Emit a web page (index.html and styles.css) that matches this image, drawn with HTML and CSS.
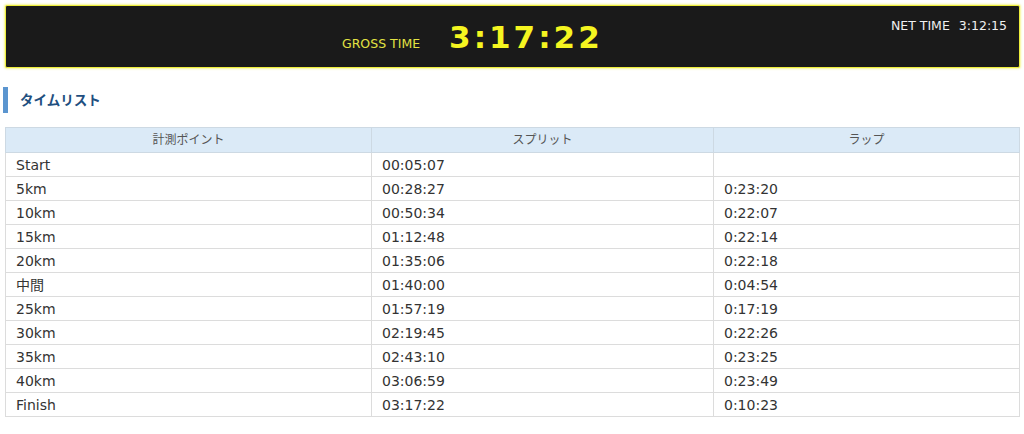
FILE: index.html
```html
<!DOCTYPE html>
<html lang="ja">
<head>
    <meta charset="UTF-8">
    <title>タイムリスト</title>
    <link rel="stylesheet" href="styles.css">
</head>
<body>

    <div class="scoreboard">
        <div class="gross">
            <span class="gross-label">GROSS TIME</span>
            <span class="gross-time">3:17:22</span>
        </div>
        <div class="net">
            <span>NET TIME</span>
            <span>3:12:15</span>
        </div>
    </div>

    <h2 class="section-title">タイムリスト</h2>

    <table class="time-list">
        <thead>
            <tr>
                <th class="col-point">計測ポイント</th>
                <th class="col-split">スプリット</th>
                <th class="col-lap">ラップ</th>
            </tr>
        </thead>
        <tbody>
            <tr><td>Start</td><td>00:05:07</td><td></td></tr>
            <tr><td>5km</td><td>00:28:27</td><td>0:23:20</td></tr>
            <tr><td>10km</td><td>00:50:34</td><td>0:22:07</td></tr>
            <tr><td>15km</td><td>01:12:48</td><td>0:22:14</td></tr>
            <tr><td>20km</td><td>01:35:06</td><td>0:22:18</td></tr>
            <tr><td>中間</td><td>01:40:00</td><td>0:04:54</td></tr>
            <tr><td>25km</td><td>01:57:19</td><td>0:17:19</td></tr>
            <tr><td>30km</td><td>02:19:45</td><td>0:22:26</td></tr>
            <tr><td>35km</td><td>02:43:10</td><td>0:23:25</td></tr>
            <tr><td>40km</td><td>03:06:59</td><td>0:23:49</td></tr>
            <tr><td>Finish</td><td>03:17:22</td><td>0:10:23</td></tr>
        </tbody>
    </table>

</body>
</html>
```

FILE: styles.css
```css
body {
    margin: 0;
    padding: 5px 4px 0 5px;
    background: #fff;
    color: #333;
    font-family: "DejaVu Sans", "Noto Sans CJK JP", sans-serif;
}

.scoreboard {
    display: flex;
    height: 61px;
    background-color: #1a1a1a;
    border: 1px solid #eded3c;
    border-radius: 2px;
    box-shadow: 0 0 2px 1px rgba(240, 240, 80, 0.6);
    padding: 0 12px 0 336px;
}

.gross {
    display: flex;
    align-items: baseline;
    align-self: flex-end;
    padding-bottom: 12px;
}

.gross-label {
    color: #e3e343;
    font-size: 12.5px;
    margin-right: 29px;
}

.gross-time {
    color: #f5f520;
    font-size: 31px;
    font-weight: bold;
    letter-spacing: 3px;
}

.net {
    display: flex;
    gap: 9px;
    margin-left: auto;
    padding-top: 12px;
    color: #f0f0f0;
    font-size: 12.5px;
}

.section-title {
    margin: 19px 0 14px -2px;
    padding: 2px 0 2px 12px;
    border-left: 5px solid #5b95cf;
    color: #1f4f80;
    font-size: 13.5px;
    font-weight: bold;
    line-height: 22px;
}

.time-list {
    width: 100%;
    border-collapse: collapse;
    font-size: 14px;
}

.time-list th,
.time-list td {
    height: 23px;
    padding: 0 10px;
    border: 1px solid #dcdcdc;
    line-height: 22px;
}

.time-list th {
    height: 24px;
    background-color: #dbeaf7;
    border-color: #cdd9e3;
    color: #555;
    font-size: 12px;
    font-weight: normal;
    text-align: center;
}

.time-list td {
    text-align: left;
}

.col-point {
    width: 345px;
}

.col-split {
    width: 321px;
}
```
